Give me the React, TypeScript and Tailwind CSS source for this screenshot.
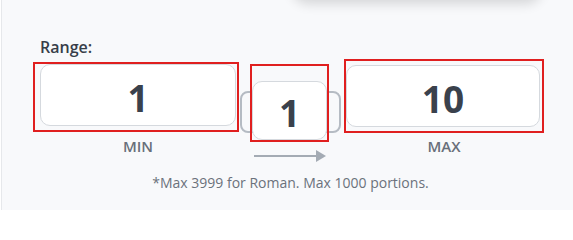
const font = { fontFamily: '"Open Sans", "Noto Sans", Arial, sans-serif' };

const NumberBox = ({ value, className }: { value: string; className: string }) => (
  <div
    className={`flex items-center justify-center rounded-[10px] border border-[#d5d9de] bg-white text-[37px] font-bold leading-none text-[#3a414c] ${className}`}
  >
    <span className="pt-1">{value}</span>
  </div>
);

const App = () => {
  return (
    <div className="h-[210px] w-[573px] overflow-hidden bg-white pl-px" style={font}>
      <div className="flow-root h-full border-l border-[#e6e8eb] bg-[#f8f9fb]">
        {/* card above, only its shadow shows */}
        <div className="-mt-10 ml-[290px] h-10 w-[250px] rounded-2xl bg-[#f8f9fb] shadow-[0_4px_12px_rgba(0,0,0,0.14)]" />

        <div className="pl-[38px] pt-[35px] text-[16px] font-semibold leading-6 text-[#373e49]">Range:</div>

        <div className="flex items-start pl-[31px]">
          {/* min */}
          <div className="mt-[3px] flex w-[206px] flex-col">
            <div className="border-2 border-[#e01f1f] pb-1 pl-[5px] pr-px">
              <NumberBox value="1" className="h-[62px]" />
            </div>
            <div className="mt-[4px] pl-1 text-center text-[15px] font-semibold leading-5 text-[#686f7a]">MIN</div>
          </div>

          {/* current */}
          <div className="ml-px mt-[5px] flex w-[101px] flex-col">
            <div className="relative h-[80px]">
              <div className="absolute left-0 top-[27px] h-[42px] w-[101px] rounded-lg border-2 border-[#b5bbc3]" />
              <div className="relative z-10 ml-[10px] w-[79px] border-2 border-[#e01f1f] pt-[15px]">
                <NumberBox value="1" className="mx-auto h-[59px] w-[75px]" />
              </div>
            </div>
            <svg className="ml-[14px] mt-[5px]" width="74" height="14" viewBox="0 0 74 14">
              <line x1="0" y1="7" x2="64" y2="7" stroke="#a4abb4" strokeWidth="2" />
              <path d="M62 1 L72 7 L62 13 Z" fill="#a4abb4" />
            </svg>
          </div>

          {/* max */}
          <div className="ml-[3px] flex w-[200px] flex-col">
            <div className="border-2 border-[#e01f1f] pb-1 pr-0.5 pt-1">
              <NumberBox value="10" className="h-[62px]" />
            </div>
            <div className="mt-[3px] text-center text-[15px] font-semibold leading-5 text-[#686f7a]">MAX</div>
          </div>
        </div>

        <div className="mt-[10px] pl-[6px] text-center text-[14px] leading-5 text-[#6b727c]">
          *Max 3999 for Roman. Max 1000 portions.
        </div>
      </div>
    </div>
  );
};

export default App;
